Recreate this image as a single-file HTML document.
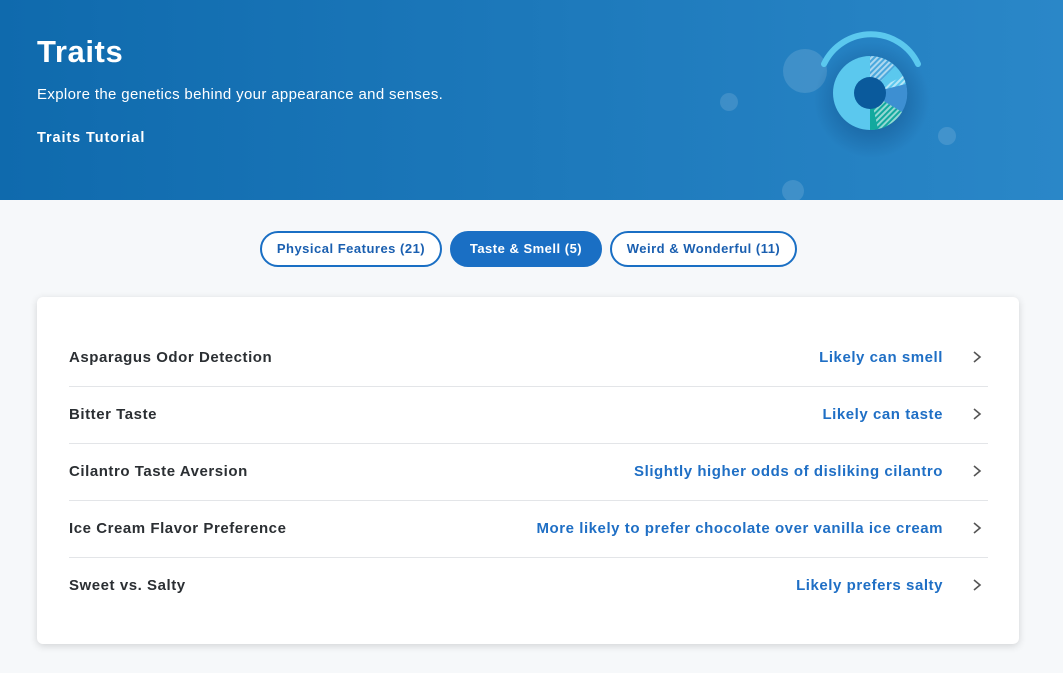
<!DOCTYPE html>
<html><head><style>
body{margin:0;width:1063px;height:673px;background:#f6f8fa;font-family:"Liberation Sans",sans-serif;overflow:hidden;position:relative}
.hdr{position:absolute;left:0;top:0;width:1063px;height:200px;background:linear-gradient(90deg,#0f6aad,#2a87c8)}
h1{position:absolute;left:37px;top:34px;margin:0;color:#fff;font-size:31px;font-weight:bold;letter-spacing:0.6px}
.sub{position:absolute;left:37px;top:86px;color:#fff;font-size:15px;letter-spacing:0.35px}
.tut{position:absolute;left:37px;top:130px;color:#fff;font-size:14.5px;font-weight:bold;letter-spacing:0.9px}
.tab{position:absolute;top:231px;height:32px;border:2px solid #1a6fc4;border-radius:18px;box-sizing:content-box;color:#1a5fb0;font-size:13px;font-weight:bold;text-align:center;line-height:32px;background:#fff;letter-spacing:0.5px}
.card{position:absolute;left:37px;top:297px;width:982px;height:347px;background:#fff;border-radius:6px;box-shadow:0 2px 8px rgba(0,0,0,.15)}
.row{position:absolute;left:32px;width:919px;height:57px;border-bottom:1px solid #e3e5e8;font-size:15px;font-weight:bold;letter-spacing:0.55px}
.row .l{position:absolute;left:0;top:20px;color:#2b2f33}
.row .r{position:absolute;right:45px;top:20px;color:#1f6fc5}
.row svg{position:absolute;right:5px;top:21px}
</style></head><body>
<div class="hdr">
<svg width="1063" height="200" style="position:absolute;left:0;top:0">
<defs><pattern id="h" width="4" height="4" patternUnits="userSpaceOnUse" patternTransform="rotate(45)"><rect width="2" height="4" fill="rgba(255,255,255,.55)"/></pattern>
<radialGradient id="s"><stop offset="0.5" stop-color="rgba(0,40,90,.25)"/><stop offset="1" stop-color="rgba(0,40,90,0)"/></radialGradient></defs>
<circle cx="805" cy="71" r="22" fill="rgba(255,255,255,.13)"/>
<circle cx="729" cy="102" r="9" fill="rgba(255,255,255,.13)"/>
<circle cx="947" cy="136" r="9" fill="rgba(255,255,255,.13)"/>
<circle cx="793" cy="191" r="11" fill="rgba(255,255,255,.13)"/>
<circle cx="872" cy="100" r="58" fill="url(#s)"/>
<path d="M824 64 A52 52 0 0 1 918 64" stroke="#5bc8ee" stroke-width="6" fill="none" stroke-linecap="round"/>
<circle cx="870" cy="93" r="37" fill="#5bc8ee"/>
<path d="M870 93 L870 56 A37 37 0 0 1 895 66 Z" fill="#4aa8dd"/>
<path d="M870 93 L870 56 A37 37 0 0 1 895 66 Z" fill="url(#h)"/>
<path d="M870 93 L903 76 A37 37 0 0 1 906 84 Z" fill="url(#h)"/>
<path d="M870 93 L906 84 A37 37 0 0 1 902 112 Z" fill="#3d8fd2"/>
<path d="M870 93 L902 112 A37 37 0 0 1 870 130 Z" fill="#12a99e"/>
<path d="M870 93 L902 112 A37 37 0 0 1 878 129 Z" fill="url(#h)"/>
<circle cx="870" cy="93" r="16" fill="#0a5a9c"/>
</svg>
<h1>Traits</h1>
<div class="sub">Explore the genetics behind your appearance and senses.</div>
<div class="tut">Traits Tutorial</div>
</div>
<div class="tab" style="left:260px;width:178px">Physical Features (21)</div>
<div class="tab" style="left:450px;width:148px;background:#1a6fc4;color:#fff">Taste &amp; Smell (5)</div>
<div class="tab" style="left:610px;width:183px">Weird &amp; Wonderful (11)</div>
<div class="card">
<div class="row" style="top:32px"><span class="l">Asparagus Odor Detection</span><span class="r">Likely can smell</span><svg width="12" height="14"><path d="M3 2l6 5-6 5" stroke="#555" stroke-width="1.6" fill="none"/></svg></div>
<div class="row" style="top:89px"><span class="l">Bitter Taste</span><span class="r">Likely can taste</span><svg width="12" height="14"><path d="M3 2l6 5-6 5" stroke="#555" stroke-width="1.6" fill="none"/></svg></div>
<div class="row" style="top:146px"><span class="l">Cilantro Taste Aversion</span><span class="r">Slightly higher odds of disliking cilantro</span><svg width="12" height="14"><path d="M3 2l6 5-6 5" stroke="#555" stroke-width="1.6" fill="none"/></svg></div>
<div class="row" style="top:203px"><span class="l">Ice Cream Flavor Preference</span><span class="r">More likely to prefer chocolate over vanilla ice cream</span><svg width="12" height="14"><path d="M3 2l6 5-6 5" stroke="#555" stroke-width="1.6" fill="none"/></svg></div>
<div class="row" style="top:260px;border-bottom:none"><span class="l">Sweet vs. Salty</span><span class="r">Likely prefers salty</span><svg width="12" height="14"><path d="M3 2l6 5-6 5" stroke="#555" stroke-width="1.6" fill="none"/></svg></div>
</div>
</body></html>
